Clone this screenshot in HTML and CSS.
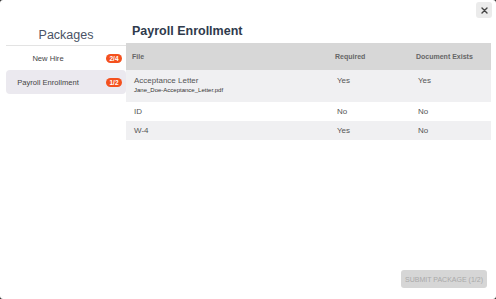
FILE: index.html
```html
<!DOCTYPE html>
<html lang="en">
<head>
  <meta charset="UTF-8" />
  <meta name="viewport" content="width=device-width, initial-scale=1.0"/>
  <title>Payroll Enrollment</title>
  <link rel="stylesheet" href="styles.css">
</head>
<body>
  <div class="modal">
    <button class="close-btn" aria-label="Close">
      <svg width="7" height="7" viewBox="0 0 7 7">
        <path d="M1 1 L6 6 M6 1 L1 6" stroke="#444" stroke-width="1.4" stroke-linecap="round"/>
      </svg>
    </button>

    <div class="layout">
      <aside class="sidebar">
        <h2 class="sidebar-title">Packages</h2>
        <div class="pkg">
          <span class="pkg-name">New Hire</span>
          <span class="badge">2/4</span>
        </div>
        <div class="pkg active">
          <span class="pkg-name">Payroll Enrollment</span>
          <span class="badge">1/2</span>
        </div>
      </aside>

      <main class="content">
        <h1 class="title">Payroll Enrollment</h1>
        <table class="files">
          <thead>
            <tr>
              <th class="col-file">File</th>
              <th class="col-req">Required</th>
              <th class="col-doc">Document Exists</th>
            </tr>
          </thead>
          <tbody>
            <tr class="shaded tall">
              <td>
                Acceptance Letter
                <div class="filename">Jane_Doe-Acceptance_Letter.pdf</div>
              </td>
              <td>Yes</td>
              <td>Yes</td>
            </tr>
            <tr>
              <td>ID</td>
              <td>No</td>
              <td>No</td>
            </tr>
            <tr class="shaded">
              <td>W-4</td>
              <td>Yes</td>
              <td>No</td>
            </tr>
          </tbody>
        </table>
      </main>
    </div>

    <div class="footer">
      <button class="submit-btn" disabled>SUBMIT PACKAGE (1/2)</button>
    </div>
  </div>
</body>
</html>
```

FILE: styles.css
```css
html, body {
  height: 100%;
}

body {
  margin: 0;
  background-color: #2b2b2b;
  font-family: 'Liberation Sans', Arial, sans-serif;
}

.modal {
  position: relative;
  height: 100%;
  background-color: #fff;
  border-radius: 3px;
  display: flex;
  flex-direction: column;
  box-sizing: border-box;
}

.close-btn {
  position: absolute;
  top: 2px;
  right: 4px;
  width: 16px;
  height: 16px;
  padding: 0;
  border: none;
  border-radius: 3px;
  background-color: #ebebeb;
  display: flex;
  align-items: center;
  justify-content: center;
  cursor: pointer;
}

.layout {
  flex: 1;
  display: flex;
  padding: 22px 5px 0 6px;
}

.sidebar {
  width: 120px;
  flex-shrink: 0;
}

.sidebar-title {
  margin: 0;
  height: 23px;
  line-height: 26px;
  font-size: 12.5px;
  font-weight: 400;
  color: #4a5366;
  text-align: center;
  border-bottom: 1px solid #e3e3e3;
}

.pkg {
  display: flex;
  align-items: center;
  gap: 16px;
  height: 24px;
  padding-right: 4px;
  border-radius: 4px;
  font-size: 7.6px;
  color: #444;
}

.pkg.active {
  background-color: #ebe9ef;
}

.pkg-name {
  flex: 1;
  text-align: center;
}

.badge {
  width: 16px;
  height: 9px;
  line-height: 9px;
  border-radius: 5px;
  background-color: #f4511e;
  color: #fff;
  font-size: 6.5px;
  font-weight: 700;
  text-align: center;
}

.content {
  flex: 1;
  min-width: 0;
}

.title {
  margin: 0 0 0 6px;
  height: 21px;
  line-height: 18px;
  font-size: 12.5px;
  font-weight: 700;
  color: #2f3a4c;
}

.files {
  width: 100%;
  border-collapse: collapse;
  font-size: 8px;
  color: #555;
}

.files th {
  height: 27px;
  padding: 0 6px;
  background-color: #d7d7d7;
  text-align: left;
  font-weight: 700;
  font-size: 7px;
  color: #666;
}

.col-file {
  width: 191px;
}

.col-req {
  width: 69px;
}

.files td {
  height: 19px;
  padding: 0 6px 0 8px;
  vertical-align: middle;
}

.files tr.tall td {
  height: 32px;
  padding-top: 6px;
  box-sizing: border-box;
  vertical-align: top;
}

.files tr.shaded td {
  background-color: #f0f0f2;
}

.filename {
  margin-top: 2px;
  font-size: 6px;
  color: #333;
}

.footer {
  display: flex;
  justify-content: flex-end;
  padding: 0 9px 11px 0;
}

.submit-btn {
  width: 86px;
  height: 18px;
  padding: 0;
  border: none;
  border-radius: 3px;
  background-color: #d6d6d6;
  color: #a9a9a9;
  font-family: 'Liberation Sans', sans-serif;
  font-size: 7px;
}
```
